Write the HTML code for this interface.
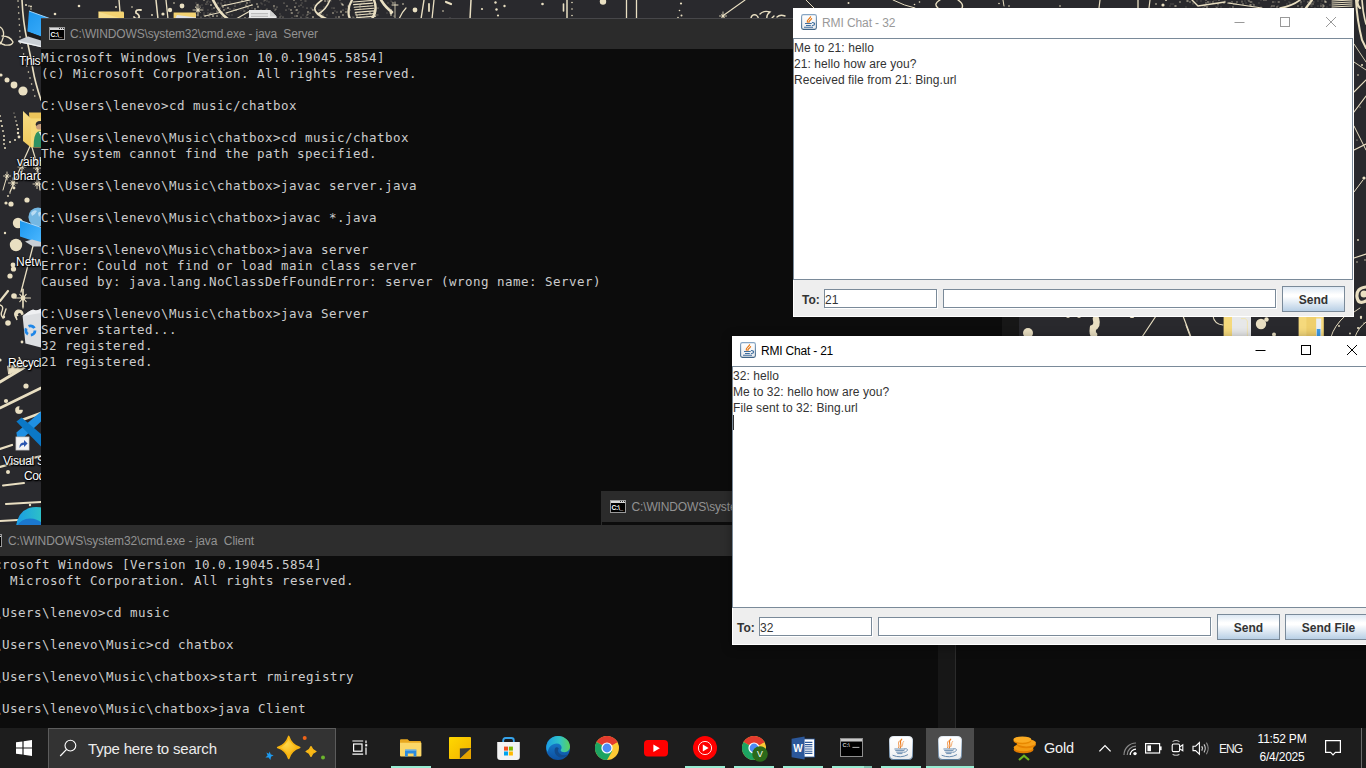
<!DOCTYPE html>
<html lang="en">
<head>
<meta charset="utf-8">
<title>Desktop</title>
<style>
*{box-sizing:border-box;margin:0;padding:0}
html,body{width:1366px;height:768px;overflow:hidden;background:#29292d}
body{position:relative;font-family:"Liberation Sans",sans-serif}
.abs{position:absolute}
#wall{position:absolute;left:0;top:0;width:1366px;height:768px}
/* desktop icon labels */
.dlabel{position:absolute;color:#fff;font-size:12px;line-height:15px;white-space:nowrap;text-shadow:0 1px 2px #000,0 0 2px #000,1px 1px 1px #000}
/* cmd windows */
.cmd{position:absolute;background:#0c0c0c;overflow:hidden}
.cmd .tb{position:absolute;left:0;top:0;right:0;height:30px;background:#2b2b2b}
.cmd .tb .ttl{position:absolute;left:29px;top:0;height:30px;line-height:31px;font-size:12px;color:#929292;white-space:pre;letter-spacing:-0.15px}
.cmd .tb svg{position:absolute;left:8px;top:8px}
.cmd pre{position:absolute;left:0;top:31px;font-family:"DejaVu Sans Mono","Liberation Mono",monospace;font-size:12.5px;letter-spacing:0.475px;line-height:16px;color:#cccccc;white-space:pre}
.cmd .sb{position:absolute;top:30px;bottom:0;right:0;width:17px;background:#171717}
/* java windows */
.jw{position:absolute;background:#fff;overflow:hidden}
.jw .jt{position:absolute;left:0;top:0;right:0;height:30px;background:#fff}
.jw .jt .ttl{position:absolute;left:29px;top:0;height:30px;line-height:31px;font-size:12px;white-space:pre;letter-spacing:-0.1px}
.jw .jt svg.ico{position:absolute;left:8px;top:6px}
.jw .sp{position:absolute;left:0;right:1px;top:30px;border:1px solid #7a8a99;background:#fff}
.jw .sp pre{font-family:"Liberation Sans",sans-serif;font-size:12px;line-height:16px;color:#333;margin:0;padding:1px 0 0 0;white-space:pre;letter-spacing:0.08px}
.jw .pn{position:absolute;left:1px;right:1px;bottom:1px;height:36px;background:#eeeeee}
.jw .lb{position:absolute;top:12px;font-size:12px;font-weight:bold;color:#333;line-height:16px}
.jw .tf{position:absolute;top:9px;height:20px;background:#fff;border:1px solid #7a8a99;border-right-color:#7a8a99;box-shadow:1px 1px 0 #fff;font-size:12px;line-height:21px;color:#333;padding-left:0;height:19px;overflow:hidden}
.jw .bt{position:absolute;top:6px;height:26px;border:1px solid #7a8a99;background:linear-gradient(#dde8f3 0%,#ffffff 32%,#ffffff 40%,#b8cfe5 100%);font-size:12px;font-weight:bold;color:#333;text-align:center;line-height:26px}
/* taskbar */
#tb{position:absolute;left:0;top:728px;width:1366px;height:40px;background:#1d1d1d}
#tb .ul{position:absolute;top:38px;height:2px;background:#98ecd2}
</style>
</head>
<body>
<svg id="wall" viewBox="0 0 1366 768">
<!--WALL-->
<g fill="none" stroke="#e9dfc2" stroke-linecap="round">
<path d="M22 0Q23 22 27 40T33 70T41 100" stroke-width="1.6"/>
<path d="M0 27Q5 30 3 38Q1 44 0 44M2 36Q10 36 13 42Q12 46 5 45Q1 44 0 42" stroke-width="1.3"/>
<path d="M31 144L22 164" stroke-width="1.2"/>
<path d="M31 144L37 164" stroke-width="1.2"/>
<path d="M22 164L10 192" stroke-width="1.2"/>
<path d="M37 164L40 190" stroke-width="1.2"/>
<path d="M22 167L26 167" stroke-width="0.9"/>
<path d="M22 167L23.7 169" stroke-width="0.9"/>
<path d="M22 167L22 171.6" stroke-width="0.9"/>
<path d="M22 167L20.3 169" stroke-width="0.9"/>
<path d="M22 167L18 167" stroke-width="0.9"/>
<path d="M22 167L20.3 165" stroke-width="0.9"/>
<path d="M22 167L22 162.4" stroke-width="0.9"/>
<path d="M22 167L23.7 165" stroke-width="0.9"/>
<path d="M37 168L40.5 168" stroke-width="0.9"/>
<path d="M37 168L38.5 169.7" stroke-width="0.9"/>
<path d="M37 168L37 172" stroke-width="0.9"/>
<path d="M37 168L35.5 169.7" stroke-width="0.9"/>
<path d="M37 168L33.5 168" stroke-width="0.9"/>
<path d="M37 168L35.5 166.3" stroke-width="0.9"/>
<path d="M37 168L37 164" stroke-width="0.9"/>
<path d="M37 168L38.5 166.3" stroke-width="0.9"/>
<path d="M13 183L17.5 183" stroke-width="0.9"/>
<path d="M13 183L14.9 185.2" stroke-width="0.9"/>
<path d="M13 183L13 188.2" stroke-width="0.9"/>
<path d="M13 183L11.1 185.2" stroke-width="0.9"/>
<path d="M13 183L8.5 183" stroke-width="0.9"/>
<path d="M13 183L11.1 180.8" stroke-width="0.9"/>
<path d="M13 183L13 177.8" stroke-width="0.9"/>
<path d="M13 183L14.9 180.8" stroke-width="0.9"/>
<path d="M37 184L41 184" stroke-width="0.9"/>
<path d="M37 184L38.7 186" stroke-width="0.9"/>
<path d="M37 184L37 188.6" stroke-width="0.9"/>
<path d="M37 184L35.3 186" stroke-width="0.9"/>
<path d="M37 184L33 184" stroke-width="0.9"/>
<path d="M37 184L35.3 182" stroke-width="0.9"/>
<path d="M37 184L37 179.4" stroke-width="0.9"/>
<path d="M37 184L38.7 182" stroke-width="0.9"/>
<path d="M7 176L10.5 176" stroke-width="0.9"/>
<path d="M7 176L8.5 177.7" stroke-width="0.9"/>
<path d="M7 176L7 180" stroke-width="0.9"/>
<path d="M7 176L5.5 177.7" stroke-width="0.9"/>
<path d="M7 176L3.5 176" stroke-width="0.9"/>
<path d="M7 176L5.5 174.3" stroke-width="0.9"/>
<path d="M7 176L7 172" stroke-width="0.9"/>
<path d="M7 176L8.5 174.3" stroke-width="0.9"/>
<path d="M7 176L3 190" stroke-width="1"/>
<path d="M33 246L21 292" stroke-width="1.3"/>
<path d="M23 298L30.5 298" stroke-width="1.1"/>
<path d="M23 298L26.2 301.7" stroke-width="1.1"/>
<path d="M23 298L23 306.6" stroke-width="1.1"/>
<path d="M23 298L19.8 301.7" stroke-width="1.1"/>
<path d="M23 298L15.5 298" stroke-width="1.1"/>
<path d="M23 298L19.8 294.3" stroke-width="1.1"/>
<path d="M23 298L23 289.4" stroke-width="1.1"/>
<path d="M23 298L26.2 294.3" stroke-width="1.1"/>
<path d="M23 289L23 308" stroke-width="1.2"/>
<path d="M15 316A4.2 4.2 0 1 1 23 314L16 316L17 320Z" stroke-width="1.2" fill="#e9dfc2"/>
<path d="M0 301L8 291" stroke-width="2.2"/>
<path d="M0 305Q4 306 2 311Q0 315 3 318Q5 312 6 309" stroke-width="1.4"/>
<path d="M8 366L20 365L19 357L23 364L25 368L9 374Z" stroke-width="1" fill="#e9dfc2"/>
<path d="M0 382L25 367" stroke-width="3"/>
<path d="M19 406.5A3.6 3.6 0 1 0 22.6 410L19 410Z" stroke-width="0.5" fill="#e9dfc2"/>
<path d="M0 408L41 388" stroke-width="2.6"/>
<path d="M22 420L41 413" stroke-width="2.4"/>
<path d="M0 449L12 445" stroke-width="2.2"/>
<path d="M0 467L41 456" stroke-width="2.2"/>
<path d="M3 485.5L24 483" stroke-width="2"/>
<path d="M6 504L41 502" stroke-width="2.2"/>
<path d="M0 521L18 520" stroke-width="2.2"/>
<path d="M119 0L120 12" stroke-width="1.4"/>
<path d="M141 10Q135 9 136 13Q140 15 139 18Q136 20 134 17" stroke-width="1.8"/>
<path d="M156 0L158 19" stroke-width="1.5"/>
<path d="M166 0L168 19" stroke-width="1.3"/>
<path d="M261 3h0M326 1h0M303 7h0M208 10h0M203 8h0M210 2h0M281 16h0M221 4h0M321 18h0M311 8h0M391 1h0M368 6h0M225 2h0M258 16h0M232 11h0M324 7h0M306 1h0M208 4h0M332 8h0M259 11h0M287 6h0M355 13h0M245 11h0M301 17h0M342 5h0M392 2h0M280 14h0M226 9h0M204 13h0M349 11h0M371 6h0M335 11h0M312 9h0M364 18h0M291 13h0M208 13h0M325 19h0M360 5h0M273 13h0M201 9h0M230 2h0M208 15h0M222 5h0M274 17h0M212 9h0M306 17h0M360 16h0M252 8h0M268 17h0M388 3h0M231 4h0M243 9h0M314 5h0M197 8h0M270 11h0M387 13h0M299 12h0M331 1h0M376 15h0M371 15h0M274 8h0M217 12h0M208 1h0M238 3h0M264 1h0M196 3h0M216 7h0M201 17h0M319 3h0M246 7h0M269 2h0M366 19h0M289 9h0M213 2h0M265 5h0M362 3h0M201 18h0M302 3h0M305 1h0M302 19h0M369 13h0M248 7h0M229 15h0M303 15h0M262 4h0M358 19h0M367 15h0M360 14h0M241 10h0M267 1h0M202 5h0M248 13h0M387 8h0M383 19h0M387 7h0M240 4h0M235 4h0M321 17h0M364 9h0M327 15h0M213 13h0M378 15h0M346 9h0M232 15h0M263 15h0M390 8h0M276 18h0M341 3h0M221 3h0M377 15h0" stroke="#e9dfc2" stroke-width="0.9" stroke-linecap="round" opacity="0.6"/>
<path d="M225 16h0M392 12h0M266 10h0M222 0h0M390 12h0M301 18h0M283 17h0M361 4h0M246 6h0M244 11h0M248 8h0M222 17h0M267 9h0M313 17h0M280 17h0M296 10h0M301 0h0M284 3h0M197 15h0M230 9h0M341 11h0M261 10h0M307 15h0M217 11h0M246 5h0M350 10h0M308 14h0M378 8h0M319 10h0M298 13h0M286 10h0M292 18h0M336 17h0M384 5h0M308 18h0M364 3h0M220 8h0M211 5h0M211 13h0M353 17h0M227 14h0M328 3h0M373 18h0M240 18h0M276 9h0M394 16h0M228 8h0M299 6h0M235 6h0M340 0h0M307 8h0M200 6h0M321 10h0M209 19h0M354 18h0M217 5h0M204 15h0M250 2h0M280 17h0M360 5h0M226 17h0M310 13h0M214 1h0M334 8h0M210 18h0M323 15h0M213 16h0M209 16h0M287 6h0M307 18h0M250 2h0M301 5h0M218 3h0M206 4h0M258 6h0M348 6h0M296 3h0M265 0h0M246 0h0M343 10h0M234 9h0M383 2h0M360 8h0M295 16h0M275 10h0M334 19h0M265 16h0M337 12h0M277 7h0M207 2h0" stroke="#e9dfc2" stroke-width="1.2" stroke-linecap="round" opacity="0.8"/>
<path d="M210 14h0M247 3h0M213 16h0M370 13h0M252 5h0M255 9h0M228 8h0M249 18h0M391 10h0M245 18h0M258 7h0M196 7h0M291 10h0M236 10h0M197 5h0M214 8h0M204 0h0M257 4h0M313 10h0M346 12h0M339 17h0M274 6h0M393 3h0M341 12h0M205 16h0M374 12h0M343 15h0M224 10h0M297 16h0M357 16h0M313 17h0M333 13h0M242 1h0M223 7h0M217 16h0M308 12h0M321 13h0M294 0h0M356 14h0M297 10h0M328 1h0M343 5h0M211 5h0M342 4h0M344 19h0M295 7h0M292 13h0M349 12h0M325 1h0M225 5h0" stroke="#e9dfc2" stroke-width="1.6" stroke-linecap="round" opacity="0.9"/>
<path d="M198 10L203 10" stroke-width="0.8"/>
<path d="M198 10L200.1 12.4" stroke-width="0.8"/>
<path d="M198 10L198 15.8" stroke-width="0.8"/>
<path d="M198 10L195.9 12.4" stroke-width="0.8"/>
<path d="M198 10L193 10" stroke-width="0.8"/>
<path d="M198 10L195.9 7.6" stroke-width="0.8"/>
<path d="M198 10L198 4.2" stroke-width="0.8"/>
<path d="M198 10L200.1 7.6" stroke-width="0.8"/>
<path d="M213 0Q220 14 228 19" stroke-width="2.6"/>
<path d="M222 6L250 0" stroke-width="1.2"/>
<path d="M226 13L252 5" stroke-width="1.2"/>
<path d="M236 19L250 11" stroke-width="1.1"/>
<path d="M205 16L222 12" stroke-width="1"/>
<path d="M322 0Q310 8 318 14Q326 10 330 0" stroke-width="1.6"/>
<path d="M318 14Q322 17 326 19" stroke-width="2.6"/>
<path d="M352 0Q346 10 350 19" stroke-width="2.2"/>
<path d="M353 2L372 0.5" stroke-width="1.1"/>
<path d="M353.6 4.6L372.6 3.1" stroke-width="1.1"/>
<path d="M354.2 7.2L373.2 5.7" stroke-width="1.1"/>
<path d="M354.8 9.8L373.8 8.3" stroke-width="1.1"/>
<path d="M355.4 12.4L374.4 10.9" stroke-width="1.1"/>
<path d="M356 15L375 13.5" stroke-width="1.1"/>
<path d="M356.6 17.6L375.6 16.1" stroke-width="1.1"/>
<path d="M374 0Q378 10 372 19" stroke-width="2.4"/>
<path d="M381 0Q386 8 392 12" stroke-width="2.6"/>
<path d="M392 5L398 5" stroke-width="1"/>
<path d="M395 2L395 19" stroke-width="0.8"/>
<path d="M399 19Q402 12 406 8" stroke-width="1.2"/>
<path d="M424 0L421 19" stroke-width="1.4"/>
<path d="M434 0L432 19" stroke-width="1.3"/>
<path d="M429 4L429 11" stroke-width="1.8"/>
<path d="M446 2L451 4" stroke-width="2.2"/>
<path d="M471 0L470 19" stroke-width="1.5"/>
<path d="M563.5 4L563.5 11" stroke-width="1.6"/>
<path d="M567 0L567 19" stroke-width="1.5"/>
<path d="M626.5 0L626.5 19" stroke-width="1.3"/>
<path d="M636.5 0L636.5 19" stroke-width="1.3"/>
<path d="M745 0L724 15" stroke-width="1.1"/>
<path d="M723 16L726.6 16" stroke-width="0.8"/>
<path d="M723 16L724.5 17.8" stroke-width="0.8"/>
<path d="M723 16L723 20.1" stroke-width="0.8"/>
<path d="M723 16L721.5 17.8" stroke-width="0.8"/>
<path d="M723 16L719.4 16" stroke-width="0.8"/>
<path d="M723 16L721.5 14.2" stroke-width="0.8"/>
<path d="M723 16L723 11.9" stroke-width="0.8"/>
<path d="M723 16L724.5 14.2" stroke-width="0.8"/>
<path d="M751 18Q752 14 756 15Q759 17 758 19M760 14Q764 10 770 12Q766 15 767 19M772 18L774 16M777 17Q780 14 785 16" stroke-width="1.4"/>
<path d="M806 0L814 8" stroke-width="1"/>
<path d="M893 0Q905 6 915 8" stroke-width="1"/>
<path d="M940 0Q933 4 938 8" stroke-width="1.4"/>
<path d="M958 0Q964 4 962 8" stroke-width="1.4"/>
<path d="M1003 0L1004 6" stroke-width="1"/>
<path d="M1100 0L1099 8" stroke-width="1.2"/>
<path d="M1138 0L1138 8" stroke-width="1.3"/>
<path d="M1150 0L1149 8" stroke-width="1.2"/>
<path d="M1289 2h0M1261 0h0M1180 2h0M1278 6h0M1278 2h0M1253 4h0M1245 1h0M1313 2h0M1327 7h0M1173 4h0M1301 8h0M1242 2h0M1204 8h0M1204 5h0M1193 4h0M1322 1h0M1301 4h0M1312 6h0M1207 7h0M1248 0h0M1171 4h0M1242 2h0M1193 3h0M1221 7h0M1170 6h0M1304 1h0M1318 6h0M1314 2h0M1230 3h0M1330 5h0M1228 3h0M1214 0h0M1186 7h0M1216 7h0M1210 2h0M1252 2h0M1230 8h0M1311 6h0M1271 7h0M1321 4h0M1285 0h0M1287 4h0M1290 5h0M1216 0h0M1318 1h0M1246 3h0M1218 6h0M1326 2h0M1275 2h0M1259 3h0M1197 1h0M1203 7h0M1250 2h0M1315 8h0M1242 1h0M1201 1h0M1225 1h0M1208 2h0M1261 7h0M1290 3h0" stroke="#e9dfc2" stroke-width="0.9" stroke-linecap="round" opacity="0.6"/>
<path d="M1236 4h0M1230 3h0M1180 2h0M1325 1h0M1251 5h0M1308 2h0M1213 2h0M1234 4h0M1323 7h0M1310 0h0M1175 6h0M1313 4h0M1264 0h0M1233 7h0M1302 7h0M1326 2h0M1187 1h0M1254 5h0M1321 6h0M1274 6h0M1243 4h0M1176 6h0M1207 7h0M1273 2h0M1190 2h0M1272 6h0M1188 1h0M1254 5h0M1232 2h0M1266 0h0M1218 4h0M1323 5h0M1311 4h0M1208 2h0M1324 6h0M1219 0h0M1250 5h0M1237 2h0M1277 7h0M1206 0h0M1224 3h0M1279 2h0M1298 6h0M1251 2h0M1325 2h0M1301 2h0M1205 6h0M1217 8h0M1249 1h0M1206 3h0" stroke="#e9dfc2" stroke-width="1.3" stroke-linecap="round" opacity="0.8"/>
<path d="M1192 0L1198 6L1225 2" stroke-width="1.4"/>
<path d="M1228 3L1262 8" stroke-width="1.1"/>
<path d="M1280 8Q1292 6 1300 0" stroke-width="1.6"/>
<path d="M1306 8L1312 0" stroke-width="2.2"/>
<path d="M1332 1L1352 0" stroke-width="1"/>
<path d="M1332 3L1352 2" stroke-width="1"/>
<path d="M1332 5L1352 4" stroke-width="1"/>
<path d="M1332 7L1352 6" stroke-width="1"/>
<path d="M1358 0Q1356 4 1360 8" stroke-width="2.4"/>
<path d="M1356 0Q1357 20 1362 40L1366 48" stroke-width="2"/>
<path d="M1362 0Q1363 14 1366 24" stroke-width="1.6"/>
<path d="M1354 44L1366 62" stroke-width="0.9"/>
<path d="M1354 62L1366 70" stroke-width="0.9"/>
<path d="M1354 92L1366 80" stroke-width="1.1"/>
<path d="M1354 112L1366 96" stroke-width="1.1"/>
<path d="M1354 126L1366 150" stroke-width="1"/>
<path d="M1354 150L1366 144" stroke-width="1.2"/>
<path d="M1354 192L1363 180" stroke-width="1"/>
<path d="M1354 258L1366 254" stroke-width="1.2"/>
<path d="M1366 287Q1356 288 1357 297Q1358 305 1366 301" stroke-width="3.2"/>
<path d="M1354 312L1360 308" stroke-width="0.9"/>
<path d="M1096 319Q1098 326 1093 328Q1092 334 1094 335" stroke-width="6.5"/>
<path d="M1156 316L1142 337" stroke-width="1.2"/>
<path d="M1183 316L1191 337" stroke-width="1.2"/>
<path d="M1186 325L1190 336" stroke-width="1.1"/>
<path d="M1213 316Q1214 324 1223 325" stroke-width="1.1"/>
<path d="M1345 316Q1334 326 1331 337" stroke-width="1"/>
<path d="M1366 322Q1358 328 1355 337" stroke-width="1"/>
</g>
<g fill="#e9dfc2">
<circle cx="18" cy="1" r="0.8"/>
<circle cx="18.4" cy="7" r="0.8"/>
<circle cx="18.7" cy="13" r="0.8"/>
<circle cx="19.1" cy="19" r="0.8"/>
<circle cx="19.4" cy="25" r="0.8"/>
<circle cx="19.8" cy="31" r="0.8"/>
<circle cx="20.1" cy="37" r="0.8"/>
<circle cx="20.4" cy="43" r="0.8"/>
<circle cx="22" cy="48" r="0.8"/>
<circle cx="23.6" cy="54" r="0.8"/>
<circle cx="25.2" cy="60" r="0.8"/>
<circle cx="26.8" cy="66" r="0.8"/>
<circle cx="28.4" cy="72" r="0.8"/>
<circle cx="30" cy="78" r="0.8"/>
<circle cx="31.6" cy="84" r="0.8"/>
<circle cx="33.2" cy="90" r="0.8"/>
<circle cx="34.8" cy="96" r="0.8"/>
<circle cx="26" cy="5" r="1"/>
<circle cx="29" cy="6" r="0.8"/>
<circle cx="31" cy="9" r="0.7"/>
<circle cx="1" cy="75" r="1.6"/>
<circle cx="7" cy="80" r="2.5"/>
<circle cx="14" cy="85" r="3.4"/>
<circle cx="23" cy="91" r="4.6"/>
<circle cx="0" cy="116" r="0.9"/>
<circle cx="1" cy="121" r="1"/>
<circle cx="2" cy="126" r="1.1"/>
<circle cx="3" cy="131" r="0.9"/>
<circle cx="4" cy="136" r="1"/>
<circle cx="4" cy="140" r="1.1"/>
<circle cx="4" cy="144" r="0.9"/>
<circle cx="5" cy="148" r="1"/>
<circle cx="14" cy="113" r="0.5"/>
<circle cx="15" cy="117" r="0.7"/>
<circle cx="16" cy="121" r="0.8"/>
<circle cx="17" cy="125" r="0.9"/>
<circle cx="18" cy="129" r="1.1"/>
<circle cx="18" cy="133" r="1.2"/>
<circle cx="19" cy="137" r="1.4"/>
<circle cx="15" cy="140" r="1"/>
<circle cx="10" cy="142" r="1"/>
<circle cx="22" cy="167" r="1.3"/>
<circle cx="37" cy="168" r="1.1"/>
<circle cx="13" cy="183" r="1.4"/>
<circle cx="37" cy="184" r="1.3"/>
<circle cx="7" cy="176" r="1.1"/>
<circle cx="6" cy="203" r="1.6"/>
<circle cx="11" cy="204" r="2.6"/>
<circle cx="27" cy="200" r="2.6"/>
<circle cx="8" cy="196" r="0.9"/>
<circle cx="10" cy="193" r="0.7"/>
<circle cx="14" cy="188" r="1.4"/>
<circle cx="18" cy="223" r="5.2"/>
<circle cx="16" cy="245" r="6.2"/>
<circle cx="13" cy="265" r="2.4"/>
<circle cx="13.5" cy="269" r="2.6"/>
<circle cx="10" cy="276" r="2.6"/>
<circle cx="5" cy="233" r="1.2"/>
<circle cx="23" cy="298" r="2.4"/>
<circle cx="14" cy="296" r="2.8"/>
<circle cx="8" cy="323" r="2.8"/>
<circle cx="22" cy="342" r="1.4"/>
<circle cx="4" cy="317" r="1.2"/>
<circle cx="19.5" cy="314.5" r="1.6" fill="#29292d"/>
<circle cx="0" cy="360" r="1.6"/>
<circle cx="26" cy="386" r="2.6"/>
<circle cx="6" cy="401" r="2.1"/>
<circle cx="8" cy="472" r="2"/>
<circle cx="30" cy="505" r="1.2"/>
<circle cx="79" cy="6" r="1.3"/>
<circle cx="55" cy="14" r="1.3"/>
<circle cx="31" cy="6.5" r="1"/>
<circle cx="182" cy="6" r="2.4"/>
<circle cx="170" cy="10" r="2.2"/>
<circle cx="163" cy="14" r="1.6"/>
<circle cx="152" cy="15" r="0.9"/>
<circle cx="132" cy="7" r="0.8"/>
<circle cx="116" cy="7" r="0.9"/>
<circle cx="174" cy="3" r="0.8"/>
<circle cx="198" cy="10" r="1.6"/>
<circle cx="391" cy="13" r="1.4"/>
<circle cx="415" cy="10" r="2.4"/>
<circle cx="403" cy="4" r="0.8"/>
<circle cx="391" cy="15" r="0.8"/>
<circle cx="443" cy="11" r="0.8"/>
<circle cx="450" cy="19" r="1.2"/>
<circle cx="482" cy="9" r="1.1"/>
<circle cx="495.5" cy="2.5" r="1.2"/>
<circle cx="504.5" cy="6" r="1.2"/>
<circle cx="496.5" cy="9.5" r="1.2"/>
<circle cx="498" cy="15.5" r="1.1"/>
<circle cx="542.5" cy="4" r="1.3"/>
<circle cx="572" cy="2.5" r="0.8"/>
<circle cx="572" cy="9" r="0.8"/>
<circle cx="572" cy="15.5" r="0.8"/>
<circle cx="603" cy="1.5" r="3.2"/>
<circle cx="681" cy="3.5" r="1.1"/>
<circle cx="679.5" cy="10.5" r="0.8"/>
<circle cx="681.5" cy="15.5" r="1"/>
<circle cx="678" cy="17.5" r="0.8"/>
<circle cx="723" cy="16" r="1.2"/>
<circle cx="848.5" cy="3" r="1"/>
<circle cx="914.5" cy="4.5" r="0.8"/>
<circle cx="919.5" cy="2" r="0.8"/>
<circle cx="999" cy="3.5" r="0.8"/>
<circle cx="1009" cy="6" r="0.8"/>
<circle cx="1060" cy="6" r="0.8"/>
<circle cx="1163" cy="5" r="1.6"/>
<circle cx="1156" cy="4" r="0.8"/>
<circle cx="1166" cy="0" r="1"/>
<circle cx="1362" cy="65" r="1"/>
<circle cx="1358" cy="75" r="0.8"/>
<circle cx="1360" cy="107" r="0.6"/>
<circle cx="1357" cy="140" r="0.6"/>
<circle cx="1364" cy="178" r="1.6"/>
<circle cx="1358" cy="240" r="0.9"/>
<circle cx="1357" cy="262" r="0.7"/>
<circle cx="1365" cy="260" r="0.7"/>
<circle cx="1364" cy="294" r="3.5"/>
<circle cx="1359" cy="328" r="0.8"/>
<circle cx="1361" cy="318" r="1"/>
<circle cx="1364" cy="323" r="0.6"/>
<circle cx="1028" cy="333" r="5"/>
<circle cx="1068" cy="315.5" r="2.4"/>
<circle cx="1079" cy="315.5" r="2.4"/>
<circle cx="1132" cy="315.5" r="2.6"/>
<circle cx="1261" cy="324" r="5.2"/>
<circle cx="1266.5" cy="319.5" r="2.2"/>
<circle cx="1274" cy="334.5" r="2"/>
<circle cx="1339" cy="326" r="0.9"/>
<circle cx="1350" cy="333.5" r="0.9"/>
<circle cx="1358" cy="328" r="1"/>
<circle cx="1361" cy="317" r="1.2"/>
</g>
<!--/WALL-->
<!--ICONS-->
<defs>
<linearGradient id="scr" x1="0" y1="0" x2="1" y2="1"><stop offset="0" stop-color="#1b96ee"/><stop offset="1" stop-color="#4cb8ff"/></linearGradient>
<linearGradient id="edg" x1="0" y1="0" x2="1" y2="0"><stop offset="0" stop-color="#1a9ce6"/><stop offset="1" stop-color="#2fc4c4"/></linearGradient>
<linearGradient id="fld" x1="0" y1="0" x2="0" y2="1"><stop offset="0" stop-color="#f7dc84"/><stop offset="1" stop-color="#efc95c"/></linearGradient>
</defs>
<!-- This PC -->
<path d="M29 11L62 23V44L27.4 31.6Z" fill="url(#scr)"/><path d="M29 11L62 23" stroke="#9fd4fb" stroke-width="1" fill="none"/>
<path d="M27.4 31.6L41 36.6V40.6L27 35.4Z" fill="#1b1b1d"/>
<path d="M18 40.4L28 36.6L41 40.4V47L19 42.4Z" fill="#c9ced4"/><path d="M18.4 41.4L41 46.6" stroke="#eef1f4" stroke-width="1.2" fill="none"/>
<!-- top folders -->
<path d="M98.4 11.6H122.6Q124 11.6 124 13V19H98.4Z" fill="#f3d271"/><path d="M99 12L123 19H99Z" fill="#f8df8e"/>
<path d="M173.6 12.4H194.6Q196 12.4 196 13.8V19H173.6Z" fill="#f3d271"/><path d="M177 15L196 17.4V19H175Z" fill="#dfe2e6"/>
<path d="M249 10H270L276.6 16.4V19H249Z" fill="#e9e9e9"/><path d="M270 10V16.4H276.6Z" fill="#cfcfcf"/><path d="M251 13.6H268M251 16.4H268" stroke="#bdbdbd" stroke-width="1.2"/>
<!-- user folder -->
<path d="M29 112.6H41V147H31Z" fill="#edc55a"/><path d="M23 111L31 118.4V147.4L23 141Z" fill="url(#fld)"/><path d="M31 118.4V147.4H41V118.4Z" fill="#f6d978"/>
<ellipse cx="39.4" cy="125.4" rx="3.6" ry="4.2" fill="#c79e7d"/><path d="M35.6 124.6Q36 120.6 41 121V124Q38 123.4 36.4 126Z" fill="#2c2c2e"/><path d="M33.6 147Q33.6 134 38 131.6H41V147Z" fill="#2f9163"/><path d="M38.6 132L41 136V132Z" fill="#e8ecef"/>
<!-- network -->
<circle cx="38" cy="217" r="9.6" fill="#74b7e2"/><path d="M31 213Q34 209 37 211Q35 215 32 216ZM38 213Q41 210 41 214L39 217Z" fill="#b9dcf3"/>
<path d="M20 220.4L41 227.4V243.4L20 236.4Z" fill="url(#scr)"/><path d="M20 220.4L41 227.4" stroke="#a6d8fc" stroke-width="1" fill="none"/>
<path d="M25 241.4L32 239.4L41 242V246.6L33 246.6Z" fill="#c9ced4"/>
<!-- recycle bin -->
<path d="M22.6 316L29 311.6Q33 308.4 36 311L41 308.6V347.6L25.4 343.4Z" fill="#dcdee1"/><path d="M22.6 316L41 313V309Q36 311 33 309.6Q29 311 22.6 316Z" fill="#eff0f2"/>
<circle cx="30.4" cy="330.4" r="4.6" fill="none" stroke="#1e86e8" stroke-width="2.8" stroke-dasharray="6.6 3"/>
<!-- vs code -->
<path d="M16.4 432.6L41 411.4V421.4L24.6 436.8H17Z" fill="#1f90e3"/><path d="M16.4 421.6L21.6 417.4L41 434V446.6Z" fill="#0b78c6"/>
<rect x="16" y="437" width="13" height="13" fill="#f4f4f4" stroke="#d0d0d0" stroke-width="0.8"/><path d="M19.4 448Q19.4 442.6 24 442.6V440L27.6 443.6L24 447V444.8Q21.4 444.8 19.4 448Z" fill="#2a56b0"/>
<!-- edge -->
<path d="M16 526Q18 512 29 508Q36 506 44 508V526Z" fill="url(#edg)"/><path d="M17 526Q21 518.6 30 518.4Q37 518.4 42 523V526Z" fill="#1b78cf"/>
<!-- mid folders -->
<rect x="1223.6" y="317" width="8.4" height="19" fill="#f5d97c"/><rect x="1232" y="317" width="19" height="19" fill="#e7e8e9"/><path d="M1241 318.6H1245.4L1247.4 321V336" stroke="#f3e3a6" stroke-width="0.8" fill="none"/>
<rect x="1298.6" y="317" width="25.2" height="19" fill="#f5d97c"/><rect x="1306.4" y="317" width="9.8" height="19" fill="#efcf6c"/><rect x="1316.2" y="318.6" width="5" height="17.4" fill="#e9eef4"/><rect x="1316.8" y="329" width="3.6" height="7" fill="#3a9be8"/>

<!--/ICONS-->
</svg>
<div class="dlabel" style="left:19px;top:54px;letter-spacing:-0.4px">This PC</div>
<div class="dlabel" style="left:17px;top:155px">vaibhav</div>
<div class="dlabel" style="left:13px;top:169px">bhardwaj</div>
<div class="dlabel" style="left:16px;top:255px">Network</div>
<div class="dlabel" style="left:8px;top:356px;letter-spacing:-0.5px">Recycle Bin</div>
<div class="dlabel" style="left:3px;top:454px;letter-spacing:-0.25px">Visual Studio</div>
<div class="dlabel" style="left:24px;top:469px;letter-spacing:-0.4px">Code</div>



<!-- Server cmd -->
<div class="abs" style="left:41px;top:18px;width:978px;height:1px;background:#47474a"></div>
<div class="cmd" id="srv" style="left:41px;top:19px;width:978px;height:520px">
<div class="tb"><svg width="16" height="13" viewBox="0 0 16 13"><rect x="0" y="0" width="16" height="13" fill="#9a9a9a"/><rect x="1" y="1" width="14" height="2" fill="#d8d8d8"/><rect x="1" y="3" width="14" height="9" fill="#000"/><rect x="10" y="1" width="1" height="1" fill="#333"/><rect x="12" y="1" width="1" height="1" fill="#333"/><rect x="14" y="1" width="1" height="1" fill="#333"/><text x="1.6" y="9.8" font-family="Liberation Sans,sans-serif" font-size="6.6" font-weight="bold" fill="#fff" letter-spacing="-0.3">C:\_</text></svg><div class="ttl">C:\WINDOWS\system32\cmd.exe - java  Server</div></div>
<pre>Microsoft Windows [Version 10.0.19045.5854]
(c) Microsoft Corporation. All rights reserved.

C:\Users\lenevo&gt;cd music/chatbox

C:\Users\lenevo\Music\chatbox&gt;cd music/chatbox
The system cannot find the path specified.

C:\Users\lenevo\Music\chatbox&gt;javac server.java

C:\Users\lenevo\Music\chatbox&gt;javac *.java

C:\Users\lenevo\Music\chatbox&gt;java server
Error: Could not find or load main class server
Caused by: java.lang.NoClassDefFoundError: server (wrong name: Server)

C:\Users\lenevo\Music\chatbox&gt;java Server
Server started...
32 registered.
21 registered.</pre>
<div class="sb"></div>
</div>

<!-- rmiregistry cmd -->
<div class="cmd" id="reg" style="left:601px;top:491px;width:978px;height:300px">
<div class="tb" style="height:31px;border-left:1px solid #2b2b2b"><svg style="left:8px;top:9px" width="16" height="13" viewBox="0 0 16 13"><rect x="0" y="0" width="16" height="13" fill="#9a9a9a"/><rect x="1" y="1" width="14" height="2" fill="#d8d8d8"/><rect x="1" y="3" width="14" height="9" fill="#000"/><rect x="10" y="1" width="1" height="1" fill="#333"/><rect x="12" y="1" width="1" height="1" fill="#333"/><rect x="14" y="1" width="1" height="1" fill="#333"/><text x="1.6" y="9.8" font-family="Liberation Sans,sans-serif" font-size="6.6" font-weight="bold" fill="#fff" letter-spacing="-0.3">C:\_</text></svg><div class="ttl" style="left:29.5px;top:1px">C:\WINDOWS\system32\cmd.exe - rmiregistry</div></div>
<div class="abs" style="left:0;top:31px;width:1px;height:10px;background:#2b2b2b"></div>
</div>

<!-- Client cmd -->
<div class="cmd" id="cli" style="left:-22px;top:525px;width:978px;height:300px;border-right:1px solid #2b2b2b">
<div class="tb" style="height:31px;background:#2d2d2d"><svg style="top:9px" width="16" height="13" viewBox="0 0 16 13"><rect x="0" y="0" width="16" height="13" fill="#9a9a9a"/><rect x="1" y="1" width="14" height="2" fill="#d8d8d8"/><rect x="1" y="3" width="14" height="9" fill="#000"/><rect x="10" y="1" width="1" height="1" fill="#333"/><rect x="12" y="1" width="1" height="1" fill="#333"/><rect x="14" y="1" width="1" height="1" fill="#333"/><text x="1.6" y="9.8" font-family="Liberation Sans,sans-serif" font-size="6.6" font-weight="bold" fill="#fff" letter-spacing="-0.3">C:\_</text></svg><div class="ttl" style="left:30px;top:1px;letter-spacing:-0.08px">C:\WINDOWS\system32\cmd.exe - java  Client</div></div>
<pre style="top:32px">Microsoft Windows [Version 10.0.19045.5854]
(c) Microsoft Corporation. All rights reserved.

C:\Users\lenevo&gt;cd music

C:\Users\lenevo\Music&gt;cd chatbox

C:\Users\lenevo\Music\chatbox&gt;start rmiregistry

C:\Users\lenevo\Music\chatbox&gt;java Client</pre>
<div class="sb" style="top:31px"></div>
</div>


<!-- RMI Chat 32 -->
<div class="jw" id="c32" style="left:793px;top:8px;width:561px;height:309px">
<div class="jt"><svg class="ico" width="16" height="16" viewBox="0 0 16 16"><defs><linearGradient id="jg1" x1="0" y1="0" x2="0" y2="1"><stop offset="0" stop-color="#ffffff"/><stop offset="1" stop-color="#e9ebee"/></linearGradient><linearGradient id="jb1" x1="0" y1="0" x2="0" y2="1"><stop offset="0" stop-color="#86a5c4"/><stop offset="1" stop-color="#3f6486"/></linearGradient></defs><rect x="0.6" y="0.6" width="14.8" height="14.8" rx="1.8" fill="url(#jg1)" stroke="url(#jb1)" stroke-width="1.1"/><path d="M6.3 8.2C5.4 6 8.6 5.2 9.6 2.8M7.9 8.6C7.2 6.8 10 6.6 10.6 4.6" fill="none" stroke="#e8730c" stroke-width="1.15" stroke-linecap="round"/><path d="M4 9.4H10.7M5 11.4H9.8M3 13.3H12" stroke="#3e6e9e" stroke-width="1.05" fill="none"/><path d="M11.4 8.5C14.4 8.4 14.2 11.4 11.4 11.5" stroke="#3e6e9e" stroke-width="1.2" fill="none" stroke-linecap="round"/></svg><div class="ttl" style="color:#999">RMI Chat - 32</div><svg class="abs" style="right:0px;top:0" width="138" height="30" viewBox="0 0 138 30"><path d="M18.5 14.5h10" stroke="#999" stroke-width="1" fill="none"/><rect x="64.5" y="9.5" width="9" height="9" fill="none" stroke="#999" stroke-width="1"/><path d="M110 9l10 10M120 9l-10 10" stroke="#999" stroke-width="1" fill="none"/></svg></div>
<div class="sp" style="height:242px"><pre>Me to 21: hello
21: hello how are you?
Received file from 21: Bing.url</pre></div>
<div class="pn">
<div class="lb" style="left:8px">To:</div>
<div class="tf" style="left:30px;width:113px">21</div>
<div class="tf" style="left:149px;width:333px"></div>
<div class="bt" style="left:488px;width:63px">Send</div>
</div>
</div>

<!-- RMI Chat 21 -->
<div class="jw" id="c21" style="left:732px;top:336px;width:643px;height:309px;box-shadow:0 2px 10px rgba(0,0,0,.4)">
<div class="jt"><svg class="ico" width="16" height="16" viewBox="0 0 16 16"><defs><linearGradient id="jg2" x1="0" y1="0" x2="0" y2="1"><stop offset="0" stop-color="#ffffff"/><stop offset="1" stop-color="#e9ebee"/></linearGradient><linearGradient id="jb2" x1="0" y1="0" x2="0" y2="1"><stop offset="0" stop-color="#86a5c4"/><stop offset="1" stop-color="#3f6486"/></linearGradient></defs><rect x="0.6" y="0.6" width="14.8" height="14.8" rx="1.8" fill="url(#jg2)" stroke="url(#jb2)" stroke-width="1.1"/><path d="M6.3 8.2C5.4 6 8.6 5.2 9.6 2.8M7.9 8.6C7.2 6.8 10 6.6 10.6 4.6" fill="none" stroke="#e8730c" stroke-width="1.15" stroke-linecap="round"/><path d="M4 9.4H10.7M5 11.4H9.8M3 13.3H12" stroke="#3e6e9e" stroke-width="1.05" fill="none"/><path d="M11.4 8.5C14.4 8.4 14.2 11.4 11.4 11.5" stroke="#3e6e9e" stroke-width="1.2" fill="none" stroke-linecap="round"/></svg><div class="ttl" style="color:#000;letter-spacing:-0.2px">RMI Chat - 21</div><svg class="abs" style="right:0px;top:0" width="138" height="30" viewBox="0 0 138 30"><path d="M18.5 14.5h10" stroke="#000" stroke-width="1" fill="none"/><rect x="64.5" y="9.5" width="9" height="9" fill="none" stroke="#000" stroke-width="1"/><path d="M110 9l10 10M120 9l-10 10" stroke="#000" stroke-width="1" fill="none"/></svg></div>
<div class="sp" style="height:242px"><pre>32: hello
Me to 32: hello how are you?
File sent to 32: Bing.url</pre><div class="abs" style="left:0;top:48px;width:1px;height:15px;background:#333"></div></div>
<div class="pn">
<div class="lb" style="left:4px">To:</div>
<div class="tf" style="left:26px;width:113px">32</div>
<div class="tf" style="left:145px;width:333px"></div>
<div class="bt" style="left:484px;width:63px">Send</div>
<div class="bt" style="left:552px;width:87px">Send File</div>
</div>
</div>


<div id="tb">
<!-- start -->
<svg class="abs" style="left:16px;top:12px" width="16" height="16" viewBox="0 0 16 16"><path d="M0 2.3L6.4 1.4V7.4H0zM7.6 1.2L16 0V7.4H7.6zM0 8.6H6.4V14.6L0 13.7zM7.6 8.6H16V16L7.6 14.8z" fill="#fff"/></svg>
<!-- search -->
<div class="abs" style="left:48px;top:0;width:288px;height:40px;background:#333;border:1px solid #5c5c5c;border-bottom:none"></div>
<svg class="abs" style="left:58px;top:10px" width="20" height="20" viewBox="0 0 20 20"><circle cx="12.4" cy="7.6" r="5.4" fill="none" stroke="#fff" stroke-width="1.1"/><path d="M8.6 11.4L2.2 18" stroke="#fff" stroke-width="1.2"/></svg>
<div class="abs" id="srch" style="left:88px;top:0;height:40px;line-height:41px;font-size:15px;color:#ececec;white-space:nowrap;letter-spacing:-0.2px">Type here to search</div>
<svg class="abs" style="left:262px;top:4px" width="68" height="34" viewBox="0 0 68 34"><defs><radialGradient id="sg" cx="0.4" cy="0.35" r="0.7"><stop offset="0" stop-color="#ffd84a"/><stop offset="1" stop-color="#f5a800"/></radialGradient></defs>
<path d="M26.7 4.4Q29.3 12.8 37.7 15.4Q29.3 18.0 26.7 26.4Q24.1 18.0 15.7 15.4Q24.1 12.8 26.7 4.4Z" fill="url(#sg)" stroke="#f7b410" stroke-width="1.6" stroke-linejoin="round"/>
<path d="M49.0 14.5Q50.2 18.3 54.0 19.5Q50.2 20.7 49.0 24.5Q47.8 20.7 44.0 19.5Q47.8 18.3 49.0 14.5Z" fill="#f9b816" stroke="#f9b816" stroke-width="1.2" stroke-linejoin="round"/>
<path d="M7.6 19.6L8.8 22.6L11.6 23.2L9 24.8L8.4 28L6.6 25.4L3.4 25.6L5.6 23.4L4.4 20.6L6.8 21.8Z" fill="#1e9bf0"/>
<circle cx="42.7" cy="6" r="2" fill="#f06418"/><circle cx="61" cy="25.6" r="2" fill="#6cb52d"/></svg>
<!-- task view -->
<svg class="abs" style="left:351px;top:12px" width="18" height="17" viewBox="0 0.4 18 17"><g fill="none" stroke="#fff" stroke-width="1.2"><rect x="2.6" y="4.4" width="8.4" height="7.2"/><path d="M1.4 1.4H12.2M1.4 14.6H12.2M15 1V3.6M15 8V15.2"/></g><rect x="14.2" y="4.6" width="2" height="2.2" fill="#fff"/></svg>
<!-- explorer -->
<svg class="abs" style="left:399px;top:9px" width="24" height="22" viewBox="0 0 24 22"><path d="M1 3.2Q1 2.2 2 2.2H8.6L10.4 4H21Q22 4 22 5V7H1Z" fill="#e8a820"/><path d="M1 5.8H22.4V18.6Q22.4 19.6 21.4 19.6H2Q1 19.6 1 18.6Z" fill="#fbd768"/><path d="M6 19.6V13.4H17.4V19.6H14.6V16.4H8.8V19.6Z" fill="#2a8be0"/><rect x="6" y="12.4" width="11.4" height="1.4" fill="#57a9ef"/></svg>
<div class="ul" style="left:391px;width:40px"></div>
<!-- sticky notes -->
<svg class="abs" style="left:449px;top:9px" width="22" height="22" viewBox="0 0 22 22"><defs><linearGradient id="sn" x1="0" y1="0" x2="1" y2="1"><stop offset="0" stop-color="#ffd800"/><stop offset="1" stop-color="#f2b200"/></linearGradient></defs><rect width="22" height="22" rx="0.8" fill="url(#sn)"/><path d="M10.9 11.6L22 11V11.4L10.9 21.8Z" fill="#3b3b3b"/><path d="M22 11.4V22H10.9Z" fill="#e6a400"/></svg>
<!-- store -->
<svg class="abs" style="left:496px;top:8px" width="25" height="25" viewBox="0 0 25 25"><path d="M7.2 6.6V4.4Q7.2 2 9.6 2H15.4Q17.8 2 17.8 4.4V6.6" fill="none" stroke="#36a3ea" stroke-width="1.8"/><path d="M1.2 6H23.8V21Q23.8 24 20.8 24H4.2Q1.2 24 1.2 21Z" fill="#f3f3f3"/><rect x="8" y="10.6" width="4" height="4" fill="#f25022"/><rect x="12.9" y="10.6" width="4" height="4" fill="#7fba00"/><rect x="8" y="15.5" width="4" height="4" fill="#00a4ef"/><rect x="12.9" y="15.5" width="4" height="4" fill="#ffb900"/></svg>
<!-- edge -->
<svg class="abs" style="left:546px;top:8px" width="24" height="24" viewBox="0 0 24 24"><defs><linearGradient id="eg1" x1="0" y1="0" x2="1" y2="0"><stop offset="0" stop-color="#1b9de2"/><stop offset="0.55" stop-color="#2fc3c9"/><stop offset="1" stop-color="#5bd15a"/></linearGradient><linearGradient id="eg2" x1="0" y1="0" x2="0" y2="1"><stop offset="0" stop-color="#1a86d8"/><stop offset="1" stop-color="#0c4f9f"/></linearGradient></defs><circle cx="12" cy="12" r="12" fill="url(#eg2)"/><path d="M0.4 10.5C1.2 4.4 6 0 12 0C18.8 0 24 5 24 10.6C24 14 21.6 16.2 18.6 16.2C16.4 16.2 14.6 15.4 14.6 14.2C14.6 13.4 15.6 13.2 15.6 11.4C15.6 9.4 13.6 7.4 10.8 7.4C6 7.4 2 11 2 16C0.6 14.6 0.2 12.4 0.4 10.5Z" fill="url(#eg1)"/><path d="M9 12.4C7.6 15.6 9.6 20.4 14.4 21.4C17.4 22 20.6 20.6 22 18.6C19 20 14.4 19.4 12.6 16.4C11.8 15 12 13.4 12.8 12.4C11.6 11 9.8 11 9 12.4Z" fill="#114a8b"/></svg>
<!-- chrome -->
<svg class="abs" style="left:595px;top:8px" width="24" height="24" viewBox="0 0 24 24"><circle cx="12" cy="12" r="12" fill="#fcc934"/><path d="M12 12L1.6 6A12 12 0 0 1 22.4 6Z" fill="#e33b2e"/><path d="M12 12L1.6 6A12 12 0 0 0 12 24L17.2 15Z" fill="#1da462"/><path d="M12 12L22.4 6H12Z" fill="#e33b2e"/><circle cx="12" cy="12" r="5.6" fill="#fff"/><circle cx="12" cy="12" r="4.4" fill="#4c8bf5"/></svg>
<!-- youtube -->
<svg class="abs" style="left:644px;top:12px" width="24" height="17" viewBox="0 0 24 17"><rect x="0" y="0" width="24" height="16.4" rx="4" fill="#ff0000"/><path d="M9.4 4.4L15.8 8.2L9.4 12Z" fill="#fff"/></svg>
<!-- yt music -->
<svg class="abs" style="left:693px;top:8px" width="24" height="24" viewBox="0 0 24 24"><circle cx="12" cy="12" r="12" fill="#ff0000"/><circle cx="12" cy="12" r="6.6" fill="none" stroke="#fff" stroke-width="0.9"/><path d="M9.8 8.4L15.6 12L9.8 15.6Z" fill="#fff"/></svg>
<div class="ul" style="left:685px;width:40px"></div>
<!-- chrome V -->
<svg class="abs" style="left:742px;top:8px" width="28" height="28" viewBox="0 0 28 28"><circle cx="12" cy="12" r="12" fill="#fcc934"/><path d="M12 12L1.6 6A12 12 0 0 1 22.4 6Z" fill="#e33b2e"/><path d="M12 12L1.6 6A12 12 0 0 0 12 24L17.2 15Z" fill="#1da462"/><path d="M12 12L22.4 6H12Z" fill="#e33b2e"/><circle cx="12" cy="12" r="5.6" fill="#fff"/><circle cx="12" cy="12" r="4.4" fill="#4c8bf5"/><circle cx="18" cy="18" r="7.8" fill="#2c6a1a"/><text x="18" y="21.2" text-anchor="middle" font-family="Liberation Sans,sans-serif" font-size="8.8" fill="#fff">V</text></svg>
<div class="ul" style="left:734px;width:40px"></div>
<!-- word -->
<svg class="abs" style="left:791px;top:8px" width="24" height="24" viewBox="0 0 24 24"><rect x="11" y="3" width="12.4" height="18" fill="#fff" stroke="#2b579a" stroke-width="0.8"/><path d="M14 6.4H21.4M14 8.6H21.4M14 10.8H21.4M14 13H21.4M14 15.2H21.4M14 17.4H21.4" stroke="#2b579a" stroke-width="1.1"/><path d="M0.6 2.8L13.6 0.4V23.6L0.6 21.2Z" fill="#2b579a"/><text x="7" y="15.8" text-anchor="middle" font-family="Liberation Sans,sans-serif" font-size="10" font-weight="bold" fill="#fff">W</text></svg>
<div class="ul" style="left:783px;width:40px"></div>
<!-- cmd -->
<svg class="abs" style="left:840px;top:10px" width="23" height="19" viewBox="0 0 23 19"><rect x="0" y="0" width="23" height="19" fill="#8f8f8f"/><rect x="1" y="1" width="21" height="2.6" fill="#c9c9c9"/><rect x="1" y="3.6" width="21" height="14.4" fill="#000"/><text x="2.4" y="9.4" font-family="Liberation Sans,sans-serif" font-size="5.6" font-weight="bold" fill="#c4c4c4">C:\</text><path d="M12.4 9.4H19.4" stroke="#c4c4c4" stroke-width="0.9"/></svg>
<div class="ul" style="left:832px;width:32px"></div><div class="ul" style="left:864px;width:8px;background:#7dbfad"></div>
<!-- java 1 -->
<svg width="0" height="0" class="abs"><defs><linearGradient id="jbg" x1="0" y1="0" x2="0" y2="1"><stop offset="0" stop-color="#ffffff"/><stop offset="0.5" stop-color="#fafafa"/><stop offset="1" stop-color="#e9ebee"/></linearGradient><linearGradient id="jbd" x1="0" y1="0" x2="0" y2="1"><stop offset="0" stop-color="#e4ecf4"/><stop offset="1" stop-color="#5a7b9b"/></linearGradient></defs></svg><svg class="abs" style="left:889px;top:8px" width="24" height="24" viewBox="0 0 24 24"><rect x="0.5" y="0.5" width="23" height="23" rx="3.6" fill="url(#jbg)" stroke="url(#jbd)" stroke-width="1"/><g fill="none" stroke-linecap="round"><path d="M12.8 3.2C9 6.6 14 8.6 11.2 12.2" stroke="#ec7a1c" stroke-width="1.1"/><path d="M10.6 4.8C7.8 7.6 11.2 9 9.6 11.6" stroke="#ec7a1c" stroke-width="0.9"/><path d="M14.6 5.4C12.8 7.2 14.6 8.6 12.8 10.8" stroke="#f09a52" stroke-width="0.8"/><path d="M5.8 13H15.8M6.6 14.6H15M7.6 16.2H14M8.6 17.6H13" stroke="#6689ad" stroke-width="0.95"/><path d="M4 19.4Q11.6 22.6 18.6 18.8" stroke="#6689ad" stroke-width="1"/><path d="M15.8 12.8C19.6 11.8 19.6 15.6 15 16.4" stroke="#6689ad" stroke-width="0.95"/></g></svg>
<div class="ul" style="left:881px;width:40px"></div>
<!-- java 2 active -->
<div class="abs" style="left:926px;top:0;width:48px;height:40px;background:#4c4c4c"></div>
<svg class="abs" style="left:938px;top:8px" width="24" height="24" viewBox="0 0 24 24"><rect x="0.5" y="0.5" width="23" height="23" rx="3.6" fill="url(#jbg)" stroke="url(#jbd)" stroke-width="1"/><g fill="none" stroke-linecap="round"><path d="M12.8 3.2C9 6.6 14 8.6 11.2 12.2" stroke="#ec7a1c" stroke-width="1.1"/><path d="M10.6 4.8C7.8 7.6 11.2 9 9.6 11.6" stroke="#ec7a1c" stroke-width="0.9"/><path d="M14.6 5.4C12.8 7.2 14.6 8.6 12.8 10.8" stroke="#f09a52" stroke-width="0.8"/><path d="M5.8 13H15.8M6.6 14.6H15M7.6 16.2H14M8.6 17.6H13" stroke="#6689ad" stroke-width="0.95"/><path d="M4 19.4Q11.6 22.6 18.6 18.8" stroke="#6689ad" stroke-width="1"/><path d="M15.8 12.8C19.6 11.8 19.6 15.6 15 16.4" stroke="#6689ad" stroke-width="0.95"/></g></svg>
<div class="ul" style="left:926px;width:48px"></div>
<!-- gold -->
<svg class="abs" style="left:1012px;top:8px" width="25" height="26" viewBox="0 0 25 26"><ellipse cx="11.6" cy="13.6" rx="10" ry="3.6" fill="#e07a00"/><ellipse cx="11.6" cy="11.6" rx="10" ry="3.6" fill="#f39a10"/><ellipse cx="14.4" cy="8.6" rx="9.6" ry="3.6" fill="#e58200"/><ellipse cx="14.4" cy="6.8" rx="9.6" ry="3.6" fill="#f7a21a"/><ellipse cx="10.4" cy="4.8" rx="9" ry="3.4" fill="#e88800"/><ellipse cx="10.4" cy="3.6" rx="9" ry="3.2" fill="#fbab22"/><path d="M7 24L12 19.6L17 24" fill="none" stroke="#6db21e" stroke-width="2.2"/></svg>
<div class="abs" style="left:1044px;top:0;height:40px;line-height:40px;font-size:14.5px;color:#f2f2f2;letter-spacing:-0.2px">Gold</div>
<!-- chevron -->
<svg class="abs" style="left:1098px;top:15px" width="14" height="10" viewBox="0 0 14 10"><path d="M1.4 8.4L7 2.6L12.6 8.4" fill="none" stroke="#fff" stroke-width="1.3"/></svg>
<!-- wifi -->
<svg class="abs" style="left:1123px;top:13px" width="15" height="15" viewBox="0 0 15 15"><g fill="none" stroke-width="1.2"><path d="M1 14A12 12 0 0 1 13 2" stroke="#8a8a8a"/><path d="M4.2 14A8.8 8.8 0 0 1 13 5.2" stroke="#8a8a8a"/><path d="M7.2 14A5.8 5.8 0 0 1 13 8.2" stroke="#fff"/></g><circle cx="12" cy="12.6" r="1.7" fill="#fff"/></svg>
<!-- battery -->
<svg class="abs" style="left:1145px;top:15px" width="17" height="11" viewBox="0 0 17 11"><rect x="0.6" y="0.6" width="14" height="9.4" fill="none" stroke="#fff" stroke-width="1.2"/><rect x="15" y="3.4" width="1.6" height="3.8" fill="#fff"/><rect x="2.4" y="2.4" width="3.6" height="5.8" fill="#fff"/></svg>
<!-- meet now -->
<svg class="abs" style="left:1170px;top:11px" width="15" height="18" viewBox="0 0 15 18"><g fill="none" stroke="#fff" stroke-width="1.1"><rect x="2.2" y="5" width="7.4" height="7.6" rx="1.4"/><path d="M9.6 8L12.8 5.8V11.8L9.6 9.8"/><path d="M2.6 2.6Q6 0.4 9.4 2.6M2.6 15.2Q6 17.4 9.4 15.2" stroke="#bdbdbd"/></g></svg>
<!-- volume -->
<svg class="abs" style="left:1192px;top:13px" width="19" height="15" viewBox="0 0 19 15"><g fill="none" stroke="#fff" stroke-width="1.1"><path d="M1 5.2H3.6L7.4 1.6V13.2L3.6 9.6H1Z"/><path d="M9.8 5.2Q11.2 7.4 9.8 9.6"/><path d="M12 3.4Q14.6 7.4 12 11.4" stroke="#cfcfcf"/><path d="M14.4 1.6Q18 7.4 14.4 13.2" stroke="#8a8a8a"/></g></svg>
<div class="abs" style="left:1219px;top:1px;height:40px;line-height:40px;font-size:12px;color:#f2f2f2;letter-spacing:-0.9px">ENG</div>
<div class="abs" id="clk" style="left:1246px;top:2px;width:72px;text-align:center;font-size:12px;line-height:18px;color:#fff;letter-spacing:-0.2px">11:52 PM<br>6/4/2025</div>
<svg class="abs" style="left:1324px;top:11px" width="18" height="18" viewBox="0 0 18 18"><path d="M1.6 1.6H16.4V13.4H11.4L9 15.8L6.6 13.4H1.6Z" fill="none" stroke="#fff" stroke-width="1.2"/></svg>
<div class="abs" style="left:1361px;top:0;width:1px;height:40px;background:#6b6b6b"></div>
</div>
</body>
</html>
